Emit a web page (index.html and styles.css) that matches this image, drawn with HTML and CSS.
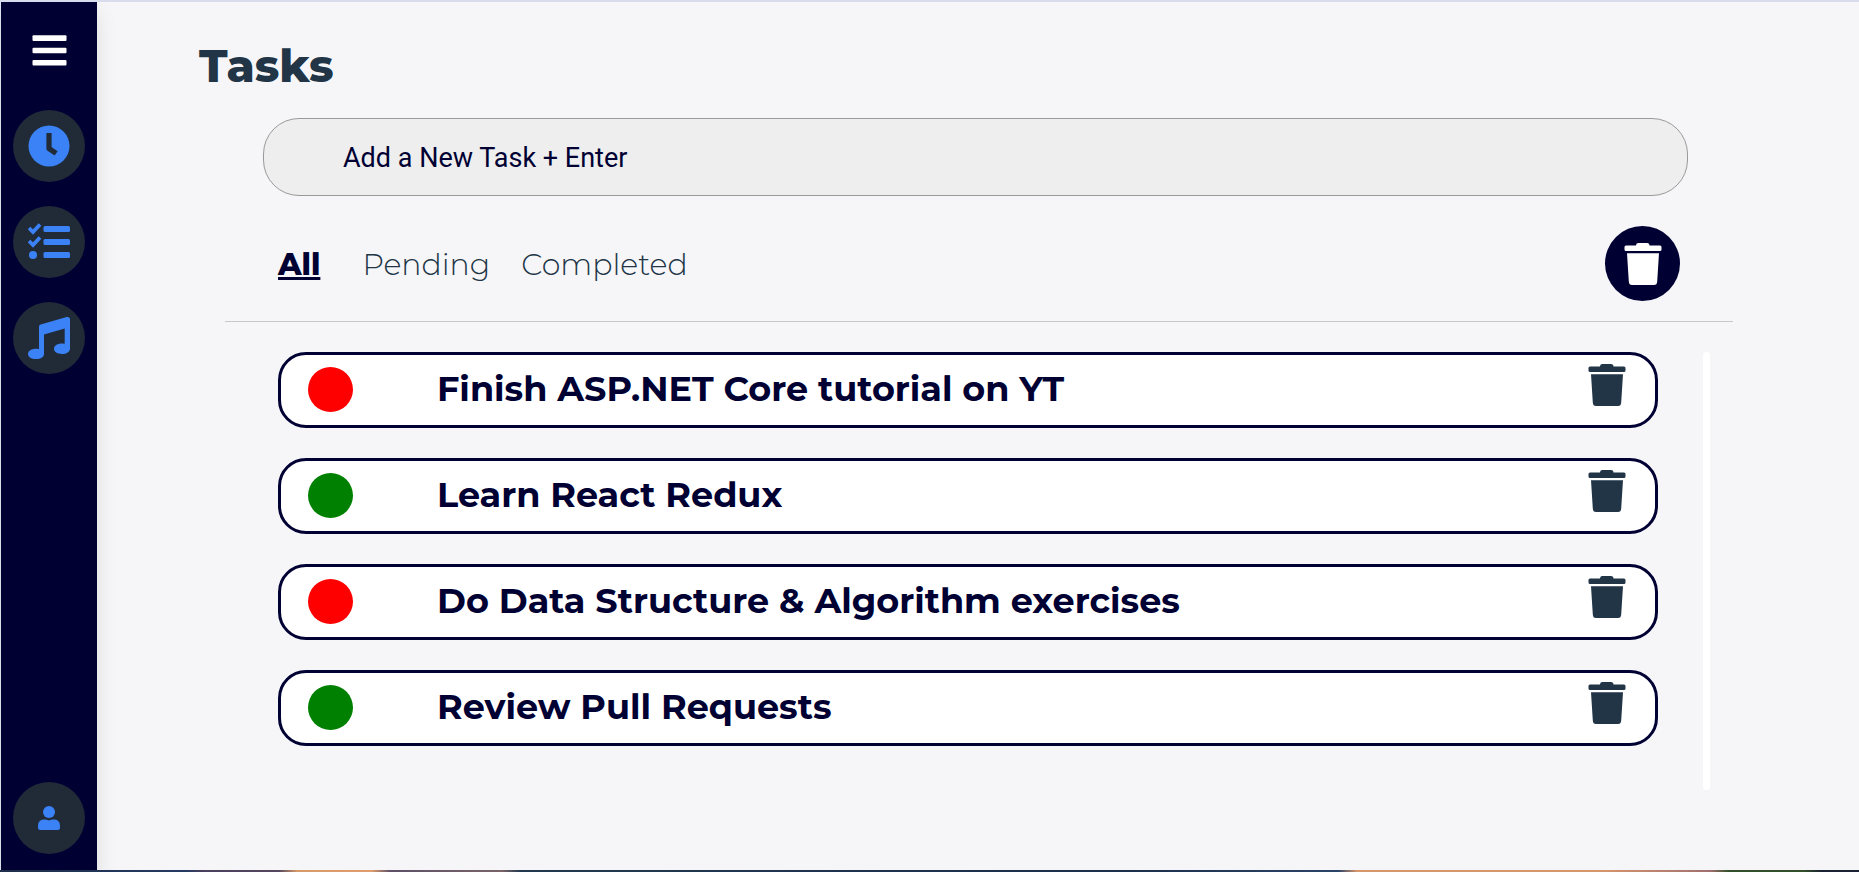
FILE: index.html
```html
<!DOCTYPE html>
<html lang="en">
<head>
<meta charset="utf-8">
<meta name="viewport" content="width=device-width, initial-scale=1">
<title>Tasks</title>
<link rel="stylesheet" href="styles.css">
</head>
<body>
<svg class="sprite" aria-hidden="true">
  <symbol id="trash" viewBox="0 0 38 42">
    <path d="M12 2.5Q12 0 14 0h9q2.500 0 2.500 2.500h10.500q1.500 0 1.500 1.500v2.500q0 1.500-1.500 1.500h-34Q.5 8 .5 6.500V4q0-1.500 1.500-1.500z"/>
    <path d="M3 10.200h32L33.200 38.500q-.2 3.500-3.200 3.500H8q-3 0-3.200-3.500z"/>
  </symbol>
</svg>
<div class="app">
  <nav class="sidebar" aria-label="Main">
    <button class="menu" type="button" aria-label="Menu">
      <svg width="36" height="32" viewBox="0 0 36 32"><g fill="#fff"><rect x="1.500" y="0.300" width="34" height="5.600" rx="1"/><rect x="1.500" y="12.700" width="34" height="5.600" rx="1"/><rect x="1.500" y="25" width="34" height="5.600" rx="1"/></g></svg>
    </button>
    <a class="round" href="#clock" aria-label="Clock">
      <svg width="42" height="42" viewBox="0 0 42 42"><circle cx="21" cy="21" r="20.500" fill="#3b82f6"/><path d="M21 10.500v13l5 3.500" fill="none" stroke="#212b38" stroke-width="5.200" stroke-linejoin="round" stroke-linecap="square"/></svg>
    </a>
    <a class="round" href="#tasks" aria-label="Tasks">
      <svg width="42" height="42" viewBox="0 0 42 42"><g fill="#3b82f6"><rect x="15.500" y="5" width="26.500" height="6" rx="1.500"/><rect x="15.500" y="18" width="26.500" height="6" rx="1.500"/><rect x="15.500" y="31" width="26.500" height="6" rx="1.500"/><circle cx="5" cy="34" r="4"/></g><g fill="none" stroke="#3b82f6" stroke-width="3.700"><path d="M1 7l4 4 7-7.500"/><path d="M1 20l4 4 7-7.500"/></g></svg>
    </a>
    <a class="round" href="#music" aria-label="Music">
      <svg width="42" height="42" viewBox="0 0 42 42"><path fill="#3b82f6" d="M11 9.800Q11 8 12.700 7.500L38.600.1Q42-.4 42 2.600V31.500C42 35 38.500 37 34 37s-8-2-8-5.200 3.500-5.300 8-5.300q1.600 0 2.700.3V11.500L16 17.500V37c0 3.300-3.500 5.200-8 5.200S0 40.200 0 37s3.500-5.300 8-5.300q1.800 0 3 .3z"/></svg>
    </a>
    <a class="round account" href="#account" aria-label="Account">
      <svg width="22" height="24" viewBox="0 0 22 24"><g fill="#3b82f6"><circle cx="11" cy="6" r="6"/><path d="M0 21.500V20q0-6 5.500-6.500 2.800-.3 5.500 1 2.700-1.300 5.500-1 5.500.5 5.500 6.500v1.500Q22 24 19.500 24h-17Q0 24 0 21.500z"/></g></svg>
    </a>
  </nav>
  <main class="main">
    <h1 class="title">Tasks</h1>
    <input class="new-task" type="text" placeholder="Add a New Task + Enter" aria-label="Add a new task">
    <div class="filters">
      <button class="filter active" type="button">All</button>
      <button class="filter" type="button">Pending</button>
      <button class="filter" type="button">Completed</button>
      <button class="clear" type="button" aria-label="Delete all tasks"><svg class="bin"><use href="#trash"/></svg></button>
    </div>
    <div class="board">
      <ul class="tasks">
        <li class="task"><button class="status pending" type="button" aria-label="Pending"></button><span class="name">Finish ASP.NET Core tutorial on YT</span><button class="remove" type="button" aria-label="Delete"><svg class="bin"><use href="#trash"/></svg></button></li>
        <li class="task"><button class="status done" type="button" aria-label="Completed"></button><span class="name">Learn React Redux</span><button class="remove" type="button" aria-label="Delete"><svg class="bin"><use href="#trash"/></svg></button></li>
        <li class="task"><button class="status pending" type="button" aria-label="Pending"></button><span class="name">Do Data Structure &amp; Algorithm exercises</span><button class="remove" type="button" aria-label="Delete"><svg class="bin"><use href="#trash"/></svg></button></li>
        <li class="task"><button class="status done" type="button" aria-label="Completed"></button><span class="name">Review Pull Requests</span><button class="remove" type="button" aria-label="Delete"><svg class="bin"><use href="#trash"/></svg></button></li>
      </ul>
      <div class="track"></div>
    </div>
  </main>
</div>
<div class="wallpaper"></div>
</body>
</html>
```
FILE: styles.css
```css
* { box-sizing: border-box; }
body {
  margin: 0;
  min-height: 100vh;
  display: flex;
  flex-direction: column;
  background: #f6f6f9;
  border-top: 2px solid #d9dcec;
  font-family: Montserrat, Inter, "Open Sans", sans-serif;
  color: #000033;
}
button { padding: 0; border: 0; background: none; font: inherit; color: inherit; cursor: pointer; }
svg { display: block; }
.sprite { position: absolute; width: 0; height: 0; }
.app { flex: 1; display: flex; border-left: 1px solid #e4e8f2; }
.sidebar {
  flex: none;
  width: 96px;
  padding: 33px 12px 16px;
  display: flex;
  flex-direction: column;
  align-items: center;
  gap: 24px;
  background: #000033;
  box-shadow: 0 10px 20px rgba(0, 0, 0, .1);
}
.menu { margin-bottom: 19px; }
.round {
  width: 72px;
  height: 72px;
  border-radius: 50%;
  display: grid;
  place-items: center;
  background: #212b38;
}
.account { margin-top: auto; }
.main { flex: 1; padding: 36px 126px 80px 128px; display: flex; flex-direction: column; }
.title { margin: 0 0 24px -26px; font-size: 45px; line-height: 56px; font-weight: 800; color: #213547; }
.new-task {
  margin: 0 45px 0 38px;
  height: 78px;
  padding: 2px 79px 0;
  border: 1px solid #999;
  border-radius: 36px;
  background: #eee;
  font: 27px/32px Roboto, sans-serif;
  color: #000033;
}
.new-task::placeholder { color: #000033; opacity: 1; }
.filters {
  margin-top: 30px;
  padding: 0 53px 20px;
  display: flex;
  align-items: center;
  border-bottom: 1px solid #c8c8cb;
}
.filter { padding-top: 2px; margin-right: 31px; font-size: 30px; line-height: 40px; font-weight: 300; color: #213547; }
.filter.active { margin-right: 42px; font-weight: 800; color: #000033; text-decoration: underline; }
.clear { margin-left: auto; width: 75px; height: 75px; border-radius: 50%; background: #000033; display: grid; place-items: center; }
.bin { width: 38px; height: 42px; fill: #213547; }
.clear .bin { fill: #fff; }
.board { flex: 1; margin: 30px 23px 0 53px; display: flex; gap: 45px; }
.tasks { flex: 1; margin: 0; padding: 0; list-style: none; display: flex; flex-direction: column; gap: 30px; }
.task {
  height: 76px;
  padding: 0 29px 2px 27px;
  display: flex;
  align-items: center;
  border: 3px solid #000033;
  border-radius: 28px;
  background: #fff;
}
.status { width: 45px; height: 45px; border-radius: 50%; }
.pending { background: #f00; }
.done { background: #008000; }
.name { flex: 1; margin-left: 84px; font-size: 35px; line-height: 44px; font-weight: 700; }
.remove { align-self: flex-start; margin-top: 9px; }
.track { width: 7px; border-radius: 4px; background: #fff; }
.wallpaper {
  height: 2px;
  background: linear-gradient(90deg, #1d2f4a, #253a63 10%, #4a3f5c 11%, #544860 15%, #d99a68 16%, #e09c6c 20%, #5c5068 21%, #7a6468 27%, #223850 28%, #1b2e4a 60%, #2a4468 72%, #d8966c 73%, #d8966c 86%, #a07070 92%, #33502a 93%, #33502a 97%, #1a2233 98%);
}
```
